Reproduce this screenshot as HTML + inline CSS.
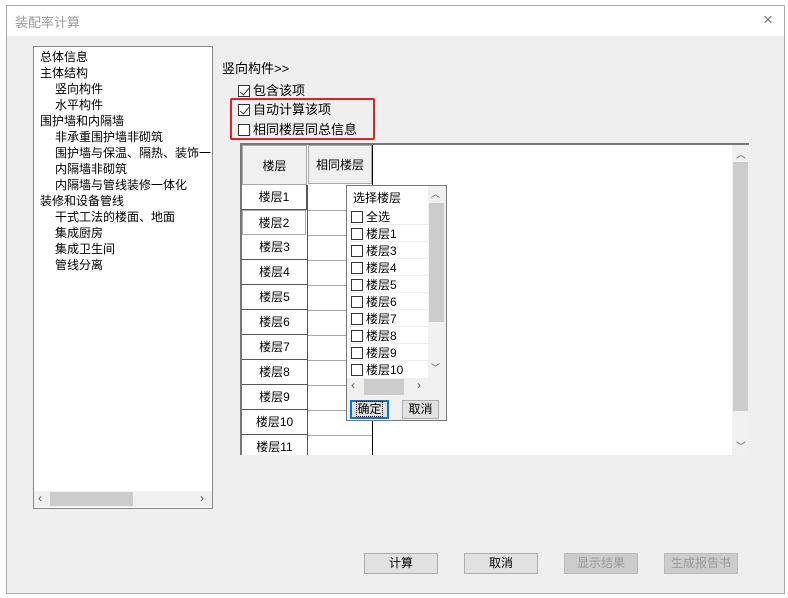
<!DOCTYPE html>
<html><head><meta charset="utf-8"><style>
*{margin:0;padding:0;box-sizing:border-box}
body{width:788px;height:598px;background:#fff;font-family:"Liberation Sans","Noto Sans CJK SC",sans-serif;font-size:12px;color:#000;position:relative;overflow:hidden}
.a{position:absolute}
.win{left:6px;top:5px;width:779px;height:589px;border:1px solid #aaa;background:#efefef}
.title{left:0;top:0;width:777px;height:30px;background:#fff;color:#999;font-size:13px;padding:6px 0 0 8px}
.tree{left:26px;top:40px;width:180px;height:463px;background:#fff;border:1px solid #888}
.tree div{height:16px;line-height:16px;white-space:nowrap}
.cb{width:12px;height:12px;border:1px solid #333;background:#fff;display:inline-block;vertical-align:-2px;margin-right:3px;position:relative}
.ck:after{content:"";position:absolute;left:3px;top:0px;width:4px;height:8px;border:solid #333;border-width:0 1.5px 1.5px 0;transform:rotate(40deg)}
.grid{left:233px;top:137px;width:509px;height:312px;background:#fff;border-top:2px solid #777;border-left:2px solid #777;overflow:hidden}
.cell{position:absolute;text-align:center;line-height:24px}
.btn{position:absolute;width:74px;height:21px;border:1px solid #adadad;background:#e1e1e1;text-align:center;line-height:19px}
.dis{color:#999;background:#ccc;border-color:#bbb}
</style></head><body>
<div class="a win">
<div class="a title">装配率计算<span class="a" style="left:756px;top:4px;color:#777;font-size:17px">×</span></div>
<div class="a tree">
<div style="padding-left:6px;padding-top:2px">
<div>总体信息</div><div>主体结构</div><div style="padding-left:15px">竖向构件</div><div style="padding-left:15px">水平构件</div><div>围护墙和内隔墙</div><div style="padding-left:15px">非承重围护墙非砌筑</div><div style="padding-left:15px">围护墙与保温、隔热、装饰一</div><div style="padding-left:15px">内隔墙非砌筑</div><div style="padding-left:15px">内隔墙与管线装修一体化</div><div>装修和设备管线</div><div style="padding-left:15px">干式工法的楼面、地面</div><div style="padding-left:15px">集成厨房</div><div style="padding-left:15px">集成卫生间</div><div style="padding-left:15px">管线分离</div>
</div>
<div class="a" style="left:0;top:444px;width:178px;height:16px;background:#f0f0f0"></div>
<div class="a" style="left:16px;top:445px;width:83px;height:14px;background:#ccc"></div>
<div class="a" style="left:4px;top:443px;color:#555">‹</div><div class="a" style="left:166px;top:443px;color:#555">›</div>
</div>
<div class="a" style="left:215px;top:52px;font-size:13px">竖向构件&gt;&gt;</div>
<div class="a" style="left:231px;top:74px;font-size:13px"><span class="cb ck"></span>包含该项</div>
<div class="a" style="left:231px;top:93px;font-size:13px"><span class="cb ck"></span>自动计算该项</div>
<div class="a" style="left:231px;top:113px;font-size:13px"><span class="cb"></span>相同楼层同总信息</div>
<div class="a" style="left:223px;top:92px;width:145px;height:42px;border:2px solid #e62020;border-radius:2px"></div>
<div class="a grid">
<div class="cell" style="left:0;top:0;width:65px;height:40px;line-height:40px;background:#f0f0f0;border:1px solid #aaa">楼层</div>
<div class="cell" style="left:66px;top:0;width:64px;height:39px;line-height:38px;background:#f0f0f0;border:1px solid #aaa">相同楼层</div>
<div class="a" style="left:130px;top:0;width:1px;height:312px;background:#000"></div>
<div class="a" style="left:490px;top:0;width:17px;height:312px;background:#f0f0f0"></div>
<div class="a" style="left:491px;top:17px;width:15px;height:249px;background:#ccc"></div>
<div class="a" style="left:494px;top:1px;font-size:10px;color:#555">︿</div>
<div class="a" style="left:494px;top:293px;font-size:10px;color:#555">﹀</div>
<div class="cell" style="left:0;top:40px;width:65px;height:25px;border-bottom:1px solid #555;border-right:1px solid #555">楼层1</div>
<div class="cell" style="left:0;top:65px;width:64px;height:25px;border:1px solid #aaa">楼层2</div>
<div class="cell" style="left:0;top:90px;width:65px;height:25px;border-bottom:1px solid #555">楼层3</div>
<div class="cell" style="left:0;top:115px;width:65px;height:25px;border-bottom:1px solid #555">楼层4</div>
<div class="cell" style="left:0;top:140px;width:65px;height:25px;border-bottom:1px solid #555">楼层5</div>
<div class="cell" style="left:0;top:165px;width:65px;height:25px;border-bottom:1px solid #555">楼层6</div>
<div class="cell" style="left:0;top:190px;width:65px;height:25px;border-bottom:1px solid #555">楼层7</div>
<div class="cell" style="left:0;top:215px;width:65px;height:25px;border-bottom:1px solid #555">楼层8</div>
<div class="cell" style="left:0;top:240px;width:65px;height:25px;border-bottom:1px solid #555">楼层9</div>
<div class="cell" style="left:0;top:265px;width:65px;height:25px;border-bottom:1px solid #555">楼层10</div>
<div class="cell" style="left:0;top:290px;width:65px;height:25px">楼层11</div>
<div class="a" style="left:65px;top:40px;width:1px;height:272px;background:#555"></div>
<div class="a" style="left:66px;top:65px;width:64px;height:1px;background:#aaa"></div>
<div class="a" style="left:66px;top:90px;width:64px;height:1px;background:#aaa"></div>
<div class="a" style="left:66px;top:115px;width:64px;height:1px;background:#aaa"></div>
<div class="a" style="left:66px;top:140px;width:64px;height:1px;background:#aaa"></div>
<div class="a" style="left:66px;top:165px;width:64px;height:1px;background:#aaa"></div>
<div class="a" style="left:66px;top:190px;width:64px;height:1px;background:#aaa"></div>
<div class="a" style="left:66px;top:215px;width:64px;height:1px;background:#aaa"></div>
<div class="a" style="left:66px;top:240px;width:64px;height:1px;background:#aaa"></div>
<div class="a" style="left:66px;top:265px;width:64px;height:1px;background:#aaa"></div>
<div class="a" style="left:66px;top:290px;width:64px;height:1px;background:#aaa"></div>
<!-- popup -->
<div class="a" style="left:104px;top:40px;width:101px;height:236px;background:#f0f0f0;border:1px solid #777">
<div class="a" style="left:0;top:0;width:81px;height:192px;background:#fff;font-size:12px;padding-left:4px">
<div style="height:22px;line-height:24px;padding-left:2px">选择楼层</div>
<div style="height:17px;border-bottom:1px solid #eee"><span class="cb"></span>全选</div>
<div style="height:17px;border-bottom:1px solid #eee"><span class="cb"></span>楼层1</div>
<div style="height:17px;border-bottom:1px solid #eee"><span class="cb"></span>楼层3</div>
<div style="height:17px;border-bottom:1px solid #eee"><span class="cb"></span>楼层4</div>
<div style="height:17px;border-bottom:1px solid #eee"><span class="cb"></span>楼层5</div>
<div style="height:17px;border-bottom:1px solid #eee"><span class="cb"></span>楼层6</div>
<div style="height:17px;border-bottom:1px solid #eee"><span class="cb"></span>楼层7</div>
<div style="height:17px;border-bottom:1px solid #eee"><span class="cb"></span>楼层8</div>
<div style="height:17px;border-bottom:1px solid #eee"><span class="cb"></span>楼层9</div>
<div style="height:17px"><span class="cb"></span>楼层10</div>
</div>
<div class="a" style="left:82px;top:17px;width:15px;height:119px;background:#ccc"></div>
<div class="a" style="left:84px;top:1px;font-size:9px;color:#555">︿</div>
<div class="a" style="left:84px;top:175px;font-size:9px;color:#555">﹀</div>
<div class="a" style="left:17px;top:193px;width:40px;height:16px;background:#ccc"></div>
<div class="a" style="left:4px;top:192px;color:#555">‹</div><div class="a" style="left:70px;top:192px;color:#555">›</div>
<div class="btn" style="left:3px;top:214px;width:39px;height:19px;line-height:15px;border:2px solid #0078d7"><span style="outline:1px dotted #000">确定</span></div>
<div class="btn" style="left:55px;top:214px;width:37px;height:19px;line-height:17px">取消</div>
</div>
</div>
<div class="btn" style="left:357px;top:547px">计算</div>
<div class="btn" style="left:457px;top:547px">取消</div>
<div class="btn dis" style="left:557px;top:547px">显示结果</div>
<div class="btn dis" style="left:657px;top:547px">生成报告书</div>
</div>
</body></html>
